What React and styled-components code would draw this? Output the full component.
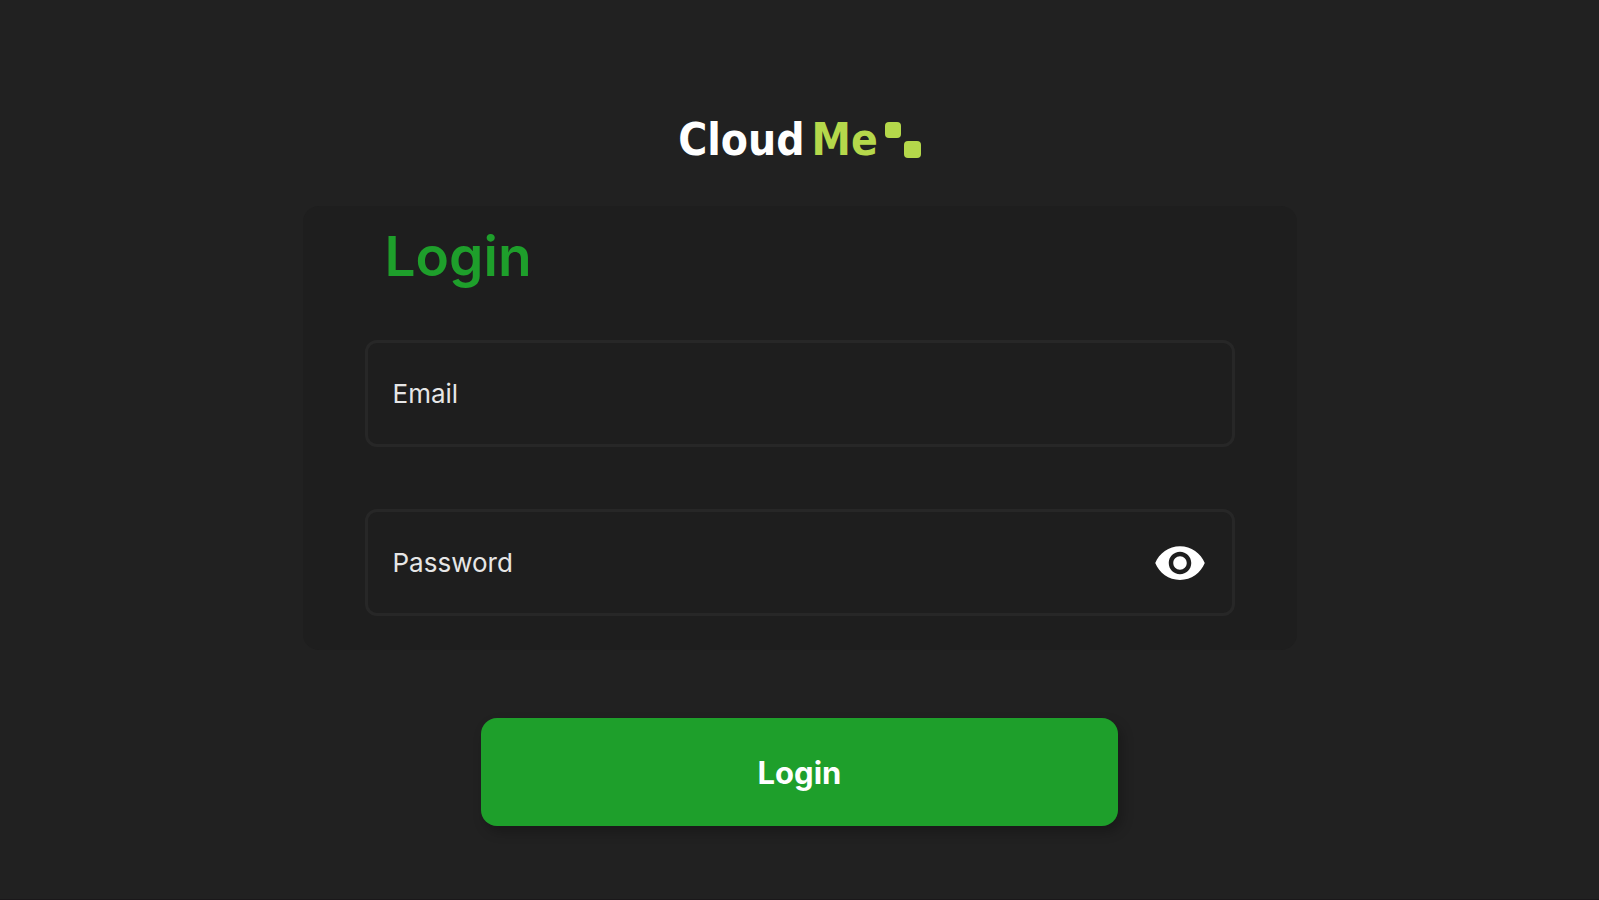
import React from 'react';
import styled, { createGlobalStyle } from 'styled-components';
import { MdVisibility } from 'react-icons/md';

const GlobalStyle = createGlobalStyle`
	* {
		box-sizing: border-box;
	}

	body {
		margin: 0;
		background: #212121;
		font-family: Inter, 'Liberation Sans', sans-serif;
	}
`;

const Page = styled.main`
	display: flex;
	flex-direction: column;
	align-items: center;

	min-height: 100vh;
	padding: 112px 24px 64px;

	border-bottom: 1px solid #1a181a;
`;

const Logo = styled.div`
	display: flex;
	align-items: center;
	gap: 7px;

	color: #ffffff;

	font-family: 'DejaVu Sans Condensed', 'DejaVu Sans', sans-serif;
	font-size: 44px;
	font-weight: 700;
	line-height: 56px;
`;

const LogoAccent = styled.span`
	color: #b5d84b;
`;

const LogoDots = styled.svg`
	width: 36px;
	height: 36px;

	fill: #b5d84b;
`;

const LoginForm = styled.form`
	display: flex;
	flex-direction: column;
	align-items: center;

	width: 100%;
	max-width: 994px;
	margin-top: 38px;
`;

const Card = styled.section`
	display: flex;
	flex-direction: column;

	width: 100%;
	padding: 18px 62px 34px;

	border-radius: 16px;

	background: #1e1e1e;
`;

const Title = styled.h1`
	margin: 0 0 52px;
	padding-left: 20px;

	color: #1e9f2b;

	font-size: 55px;
	font-weight: 600;
	line-height: 64px;
`;

const Field = styled.div`
	display: flex;
	align-items: center;

	height: 107px;
	padding: 0 25px;

	border: 3px solid #272727;
	border-radius: 12px;

	& + & {
		margin-top: 62px;
	}
`;

const Input = styled.input`
	flex: 1;
	min-width: 0;
	height: 100%;
	padding: 0;

	border: none;
	outline: none;

	background: transparent;
	color: #e6e6e6;

	font-family: inherit;
	font-size: 26px;

	&::placeholder {
		color: #e6e6e6;
		opacity: 1;
	}
`;

const ToggleButton = styled.button`
	display: flex;
	padding: 0;

	border: none;

	background: none;
	color: #ffffff;

	font-size: 54px;

	cursor: pointer;
`;

const SubmitButton = styled.button`
	width: 64%;
	height: 108px;
	margin-top: 68px;

	border: none;
	border-radius: 16px;

	background: #1e9f2b;
	box-shadow: 4px 6px 12px rgba(0, 0, 0, 0.25);
	color: #ffffff;

	font-family: inherit;
	font-size: 31px;
	font-weight: 700;

	cursor: pointer;
`;

const App = () => {
	const [visible, setVisible] = React.useState(false);

	return (
		<>
			<GlobalStyle />
			<Page>
				<Logo>
					<span>Cloud</span>
					<LogoAccent>Me</LogoAccent>
					<LogoDots viewBox="0 0 36 36" aria-hidden="true">
						<rect x="0" y="0" width="16" height="16" rx="4" />
						<rect x="19" y="19" width="17" height="17" rx="4" />
					</LogoDots>
				</Logo>

				<LoginForm onSubmit={(e) => e.preventDefault()}>
					<Card>
						<Title>Login</Title>

						<Field>
							<Input type="email" placeholder="Email" aria-label="Email" />
						</Field>

						<Field>
							<Input
								type={visible ? 'text' : 'password'}
								placeholder="Password"
								aria-label="Password"
							/>
							<ToggleButton
								type="button"
								aria-label="Show password"
								aria-pressed={visible}
								onClick={() => setVisible(!visible)}
							>
								<MdVisibility />
							</ToggleButton>
						</Field>
					</Card>

					<SubmitButton type="submit">Login</SubmitButton>
				</LoginForm>
			</Page>
		</>
	);
};

export default App;
